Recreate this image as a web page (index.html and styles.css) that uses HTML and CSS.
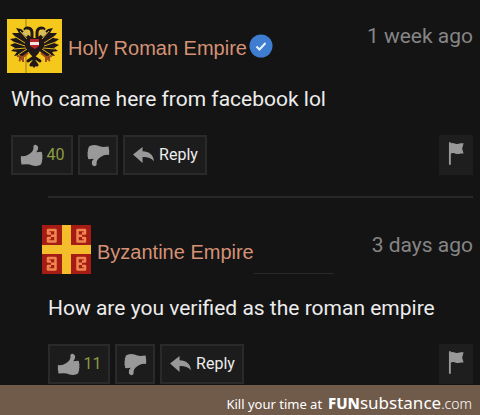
FILE: index.html
```html
<!DOCTYPE html>
<html lang="en">
<head>
<meta charset="utf-8">
<title>Comments</title>
<link rel="stylesheet" href="styles.css">
</head>
<body>
<svg class="defs" aria-hidden="true">
  <symbol id="thumb" viewBox="0 0 24 24"><path d="M1 12.500q3 .5 6-.5c4-2 6.500-4 7-7V2q1-1.500 3-1 2 1 2 3 0 2.500-2 4.500l5-.5q1.500.5 1 2.500 1 1.500.2 3 .8 1.500-.2 3 .5 1.500-.5 3 0 2-1.500 2.500-4 1.500-8 .500-3-1.500-6-1.500l-5.500.5q-1-4-.5-9.500z"/></symbol>
  <symbol id="reply" viewBox="0 0 24 20"><path d="M1 9 11 1v4.500c7 0 11.500 4 12 10.500-3-3.500-7-4.500-12-4.300V18z"/></symbol>
  <symbol id="flag" viewBox="0 0 18 26"><path d="M1 1h2v1.500c3-1.500 4 1 7 .5 2-.3 3-1 6.500-.8L15 8l1.500 5c-3-.5-4.500.8-7 .5C7 13 6 11.500 3 13v12H1z"/></symbol>
</svg>
<main class="thread">
  <article class="comment">
    <header class="head">
      <svg class="avatar" viewBox="0 0 55 54" role="img" aria-label="Black double-headed eagle on gold">
        <path fill="#f5c91b" d="M0 0h55v54H0z"/>
        <path fill="#c9a11c" d="M18 0h2v54h-2z"/>
        <path fill="#201818" d="M24 18 14 10l-5-1 3 5-7 0 4 5-6 1 5 4-5 2 5 3-4 3 6 1-3 4 6-1-1 4 5-2 7-8zM31 18l10-8 5-1-3 5 7 0-4 5 6 1-5 4 5 2-5 3 4 3-6 1 3 4-6-1 1 4-5-2-7-8z"/>
        <path fill="none" stroke="#e0b41c" stroke-width="1" d="m7 17 11 7M6 23l12 4M7 30l12-1M11 36l9-6M13 12l7 8M48 17l-11 7M49 23l-12 4M48 30l-12-1M44 36l-9-6M42 12l-7 8"/>
        <g fill="none" stroke="#201818" stroke-width="3" stroke-linecap="round">
          <path d="M25 20v-6c0-5-4-6-7-4M30 20v-6c0-5 4-6 7-4M27 32v15M27 38l-6 4M27 38l6 4M27 42l-3 4M27 42l3 4"/>
        </g>
        <path fill="#201818" d="M20 19h14l2 8-5 8-4 4-4-4-5-8z"/>
        <path fill="#d7bd62" d="m15 14 4-4 4 4-4 4zM40 14l-4-4-4 4 4 4z"/>
        <path fill="none" stroke="#a04c1c" stroke-width="2" d="m21 34-5 4-6-1m6 1-4 4m4-4v5M34 34l5 4 6-1m-6 1 4 4m-4-4v5"/>
        <path fill="#b5262b" d="M23 20h9v7l-4 3-5-3z"/>
        <path fill="#f2e6df" d="M23 23h9v3h-9z"/>
      </svg>
      <a class="name" href="#holy">Holy Roman Empire</a>
      <svg class="verified" viewBox="0 0 24 24" role="img" aria-label="Verified"><circle cx="12" cy="12" r="11.500" fill="#3f7dd0"/><path d="m7.500 12.500 3 3 6-6.500" fill="none" stroke="#e4f1ff" stroke-width="2"/></svg>
      <time class="time">1 week ago</time>
    </header>
    <p class="text">Who came here from facebook lol</p>
    <div class="actions">
      <button class="btn vote" aria-label="Like, 40"><svg class="thumb"><use href="#thumb"/></svg><span class="count">40</span></button>
      <button class="btn down" aria-label="Dislike"><svg class="thumb flip"><use href="#thumb"/></svg></button>
      <button class="btn reply"><svg class="arrow"><use href="#reply"/></svg>Reply</button>
      <button class="btn report" aria-label="Report"><svg class="flag"><use href="#flag"/></svg></button>
    </div>
  </article>
  <article class="comment nested">
    <header class="head">
      <svg class="avatar small" viewBox="0 0 49 49" role="img" aria-label="Gold cross on red">
        <path fill="#a61c14" d="M0 0h49v49H0z"/>
        <path fill="#f4bd2c" d="M20 0h9v49h-9zM0 20h49v9H0z"/>
        <g fill="none" stroke="#ef8650" stroke-width="2.500" stroke-linejoin="round">
          <path id="b" d="M9 8.500H6V5h7.500v11.500H6V13h3M13 10.700H9"/>
          <use href="#b" y="28"/>
          <use href="#b" transform="matrix(-1 0 0 1 49 0)"/>
          <use href="#b" transform="matrix(-1 0 0 1 49 28)"/>
        </g>
      </svg>
      <a class="name" href="#byzantine">Byzantine Empire</a>
      <span class="rule"></span>
      <time class="time">3 days ago</time>
    </header>
    <p class="text">How are you verified as the roman empire</p>
    <div class="actions">
      <button class="btn vote" aria-label="Like, 11"><svg class="thumb"><use href="#thumb"/></svg><span class="count">11</span></button>
      <button class="btn down" aria-label="Dislike"><svg class="thumb flip"><use href="#thumb"/></svg></button>
      <button class="btn reply"><svg class="arrow"><use href="#reply"/></svg>Reply</button>
      <button class="btn report" aria-label="Report"><svg class="flag"><use href="#flag"/></svg></button>
    </div>
  </article>
</main>
<footer class="footer"><span>Kill your time at</span><a class="brand" href="#home"><b>FUN</b>substance<span class="tld">.com</span></a></footer>
</body>
</html>
```
FILE: styles.css
```css
* { box-sizing: border-box; }
body { margin: 0; background: #141414; color: #ececec; font-family: Roboto, sans-serif; }
a { color: inherit; text-decoration: none; }
.defs { position: absolute; width: 0; height: 0; }
.thread { padding: 19px 7px 0; }
.head { display: flex; align-items: center; }
.avatar { width: 55px; height: 54px; flex: none; }
.avatar.small { width: 49px; height: 49px; }
.name { margin-left: 6px; padding-top: 4px; color: #d59274; font: 20px/24px "Liberation Sans", sans-serif; white-space: nowrap; }
.verified { width: 24px; height: 24px; margin-left: 2px; }
.time { margin-left: auto; align-self: flex-start; padding-top: 4px; color: #858585; font-size: 21px; line-height: 26px; }
.text { margin: 13px 4px 0; font-size: 21px; line-height: 26px; white-space: nowrap; }
.actions { display: flex; gap: 5px; margin: 23px 0 0 4px; }
.btn { display: flex; align-items: center; justify-content: center; height: 40px; padding: 0; border: 2px solid #2a2a2a; background: #1c1c1c; color: #ececec; font: 16px/20px Roboto, sans-serif; }
.btn svg { fill: #999; }
.vote { width: 62px; gap: 4px; }
.down { width: 40px; }
.reply { width: 84px; gap: 4px; }
.report { width: 34px; margin-left: auto; border-color: #1e1e1e; background: #1e1e1e; }
.count { color: #8d9b45; }
.thumb { width: 23px; height: 23px; }
.flip { transform: rotate(180deg); }
.arrow { width: 23px; height: 19px; }
.flag { width: 17px; height: 25px; margin-bottom: 4px; }
.nested { margin: 21px 0 0 41px; padding-top: 27px; border-top: 2px solid #282828; }
.nested .head { margin-left: -6px; }
.nested .time { padding-top: 7px; }
.nested .text { margin: 21px 0 0; }
.nested .actions { margin-left: 0; }
.rule { width: 80px; height: 1px; align-self: flex-end; background: #292929; }
.footer { display: flex; align-items: baseline; justify-content: flex-end; gap: 6px; height: 30px; margin-top: 1px; padding: 6px 8px 0 0; background: #705a4a; color: #fff; font: 13px/24px "Noto Sans", sans-serif; }
.brand { font-size: 17px; }
.brand b { font-size: 15px; font-weight: 800; }
.tld { font-size: 14px; font-weight: 300; }
```
